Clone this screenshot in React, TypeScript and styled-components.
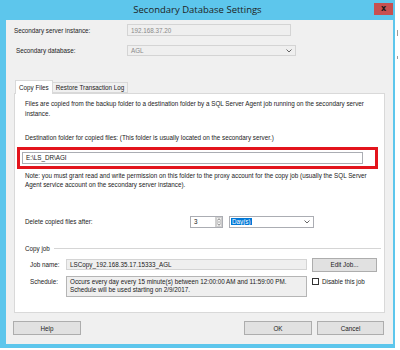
import React from "react";
import styled, { createGlobalStyle } from "styled-components";

const Global = createGlobalStyle`
  html, body { margin: 0; padding: 0; background: #ffffff; }
  body { font-family: "Liberation Sans", Arial, sans-serif; color: #1a1a1a; }
  * { box-sizing: border-box; }
`;

const Page = styled.div`
  width: 400px;
  height: 350px;
  display: flex;
  background: #ffffff;
`;

const Win = styled.div`
  width: 395px;
  height: 348px;
  background: #5dc6ec;
  display: flex;
  flex-direction: column;
  padding: 0 2px 4px 6px;
`;

const TitleBar = styled.div`
  height: 20px;
  display: flex;
  align-items: flex-start;
  position: relative;
  margin-left: -6px;
  margin-right: -2px;
`;

const Title = styled.div`
  flex: 1;
  text-align: center;
  font-family: "Open Sans", "Noto Sans", sans-serif;
  font-size: 9.5px;
  line-height: 20px;
  color: #1e1e1e;
`;

const Close = styled.div`
  position: absolute;
  right: 2px;
  top: 3px;
  width: 19px;
  height: 12px;
  background: #c75050;
  color: #1a1a1a;
  font-family: "DejaVu Sans", sans-serif;
  font-weight: bold;
  font-size: 8px;
  line-height: 12px;
  text-align: center;
`;

const Body = styled.div`
  flex: 1;
  background: #f0f0f0;
  display: flex;
  flex-direction: column;
  padding: 4px 0 0 8px;
  font-size: 6.3px;
`;

const Row = styled.div<{ $mt?: number; $h: number; $top?: boolean }>`
  display: flex;
  align-items: ${(p) => (p.$top ? "flex-start" : "center")};
  height: ${(p) => p.$h}px;
  margin-top: ${(p) => p.$mt ?? 0}px;
  white-space: nowrap;
`;

const Label = styled.div<{ $w: number; $pl?: number; $pt?: number }>`
  width: ${(p) => p.$w}px;
  padding-left: ${(p) => p.$pl ?? 0}px;
  padding-top: ${(p) => p.$pt ?? 0}px;
  flex-shrink: 0;
  color: #222;
`;

const Field = styled.div<{ $w: number; $h: number; $disabled?: boolean; $grey?: boolean; $ml?: number }>`
  width: ${(p) => p.$w}px;
  height: ${(p) => p.$h}px;
  margin-left: ${(p) => p.$ml ?? 0}px;
  border: 1px solid ${(p) => (p.$disabled ? "#d4d4d4" : "#abadb3")};
  background: ${(p) => (p.$disabled ? "#efefef" : "#ffffff")};
  color: ${(p) => (p.$grey ? "#8a8a8a" : "#1a1a1a")};
  display: flex;
  align-items: center;
  padding-left: 3px;
  flex-shrink: 0;
  position: relative;
  overflow: hidden;
  white-space: nowrap;
`;

const MultiField = styled(Field)`
  align-items: flex-start;
  flex-direction: column;
  padding-top: 1px;
  line-height: 8.5px;
  border-color: #b5b5b5;
`;

const Chevron = styled.svg`
  position: absolute;
  right: 3px;
  top: 50%;
  transform: translateY(-50%);
`;

const TabStrip = styled.div`
  display: flex;
  align-items: flex-end;
  height: 13px;
  margin-top: 24px;
  margin-left: 1px;
`;

const Tab = styled.div<{ $active?: boolean }>`
  height: ${(p) => (p.$active ? 14 : 11)}px;
  padding: 0 3px;
  border: 1px solid #d9d9d9;
  border-bottom: ${(p) => (p.$active ? "none" : "1px solid #d9d9d9")};
  background: ${(p) => (p.$active ? "#ffffff" : "#f0f0f0")};
  display: flex;
  align-items: center;
  margin-left: ${(p) => (p.$active ? 0 : -1)}px;
  margin-bottom: ${(p) => (p.$active ? -1 : 0)}px;
  position: relative;
  z-index: ${(p) => (p.$active ? 2 : 1)};
  white-space: nowrap;
  color: #222;
`;

const Panel = styled.div`
  width: 371px;
  height: 220px;
  border: 1px solid #d9d9d9;
  background: #ffffff;
  display: flex;
  flex-direction: column;
  padding: 5px 0 0 10px;
  position: relative;
  z-index: 1;
`;

const Para = styled.div<{ $mt?: number }>`
  line-height: 9.5px;
  white-space: nowrap;
  margin-top: ${(p) => p.$mt ?? 0}px;
  color: #222;
`;

const RedBox = styled.div`
  width: 361px;
  height: 22px;
  margin-left: -8px;
  margin-top: 4px;
  border: 3px solid #e3141c;
  display: flex;
  align-items: center;
  padding-left: 2px;
`;

const Spin = styled.div`
  width: 33px;
  height: 12px;
  border: 1px solid #abadb3;
  background: #fff;
  display: flex;
  align-items: center;
  padding-left: 3px;
  justify-content: space-between;
  margin-left: 165px;
  flex-shrink: 0;
`;

const SpinBtns = styled.div`
  width: 7px;
  height: 10px;
  display: flex;
  flex-direction: column;
  border-left: 1px solid #d0d0d0;
`;

const SpinBtn = styled.div`
  flex: 1;
  display: flex;
  align-items: center;
  justify-content: center;
  background: #f3f3f3;
  border: 1px solid #cfcfcf;
`;

const Selected = styled.span`
  background: #0078d7;
  color: #ffffff;
  padding: 0 1px;
  margin-left: -2px;
`;

const GroupHead = styled.div`
  display: flex;
  align-items: center;
  margin-top: 16px;
  height: 10px;
`;

const GroupLine = styled.div`
  width: 327px;
  height: 1px;
  background: #d5d5d5;
  margin-left: 4px;
`;

const Button = styled.div<{ $w: number; $h: number; $ml?: number }>`
  width: ${(p) => p.$w}px;
  height: ${(p) => p.$h}px;
  margin-left: ${(p) => p.$ml ?? 0}px;
  border: 1px solid #adadad;
  background: #e1e1e1;
  display: flex;
  align-items: center;
  justify-content: center;
  color: #222;
  flex-shrink: 0;
`;

const Check = styled.div`
  width: 7px;
  height: 7px;
  border: 1px solid #333;
  background: #fff;
  flex-shrink: 0;
`;

const CheckRow = styled.div`
  display: flex;
  align-items: center;
  gap: 3px;
  margin-left: 5px;
  margin-top: 2px;
`;

const Footer = styled.div`
  display: flex;
  align-items: center;
  margin-top: 8px;
  margin-left: -1px;
`;

const EdgeMark = styled.div`
  width: 3px;
  margin-left: 2px;
  display: flex;
  flex-direction: column;
`;

const Mark = styled.div<{ $mt: number; $h: number }>`
  margin-top: ${(p) => p.$mt}px;
  height: ${(p) => p.$h}px;
  width: 1px;
  background: #9a9a9a;
`;

const ChevronIcon = () => (
  <Chevron width="6" height="4" viewBox="0 0 6 4">
    <path d="M0.5 0.5 L3 3 L5.5 0.5" fill="none" stroke="#555" strokeWidth="0.9" />
  </Chevron>
);

export default function App() {
  return (
    <Page>
      <Global />
      <Win>
        <TitleBar>
          <Title>Secondary Database Settings</Title>
          <Close>x</Close>
        </TitleBar>
        <Body>
          <Row $h={12}>
            <Label $w={113}>Secondary server instance:</Label>
            <Field $w={164} $h={12} $disabled $grey>
              192.168.37.20
            </Field>
          </Row>
          <Row $h={11} $mt={9}>
            <Label $w={113} $pl={2}>
              Secondary database:
            </Label>
            <Field $w={169} $h={11} $disabled $grey>
              AGL
              <ChevronIcon />
            </Field>
          </Row>
          <TabStrip>
            <Tab $active>Copy Files</Tab>
            <Tab>Restore Transaction Log</Tab>
          </TabStrip>
          <Panel>
            <Para>
              Files are copied from the backup folder to a destination folder by a SQL Server Agent job running on the secondary server
              <br />
              instance.
            </Para>
            <Para $mt={15}>
              Destination folder for copied files: (This folder is usually located on the secondary server.)
            </Para>
            <RedBox>
              <Field $w={341} $h={12}>
                E:\LS_DR\AGI
              </Field>
            </RedBox>
            <Para $mt={2}>
              Note: you must grant read and write permission on this folder to the proxy account for the copy job (usually the SQL Server
              <br />
              Agent service account on the secondary server instance).
            </Para>
            <Row $h={12} $mt={26}>
              <Label $w={0}>Delete copied files after:</Label>
              <Spin>
                3
                <SpinBtns>
                  <SpinBtn>
                    <svg width="4" height="3" viewBox="0 0 4 3">
                      <path d="M0.3 2.5 L2 0.7 L3.7 2.5" fill="none" stroke="#555" strokeWidth="0.7" />
                    </svg>
                  </SpinBtn>
                  <SpinBtn>
                    <svg width="4" height="3" viewBox="0 0 4 3">
                      <path d="M0.3 0.5 L2 2.3 L3.7 0.5" fill="none" stroke="#555" strokeWidth="0.7" />
                    </svg>
                  </SpinBtn>
                </SpinBtns>
              </Spin>
              <Field $w={85} $h={12} $ml={6}>
                <Selected>Day(s)</Selected>
                <ChevronIcon />
              </Field>
            </Row>
            <GroupHead>
              Copy job
              <GroupLine />
            </GroupHead>
            <Row $h={14} $mt={4}>
              <Label $w={41} $pl={5}>
                Job name:
              </Label>
              <Field $w={241} $h={11} $disabled>
                LSCopy_192.168.35.17.15333_AGL
              </Field>
              <Button $w={65} $h={14} $ml={5}>
                Edit Job...
              </Button>
            </Row>
            <Row $h={22} $mt={4} $top>
              <Label $w={41} $pl={5} $pt={2}>
                Schedule:
              </Label>
              <MultiField $w={241} $h={21} $disabled>
                <span>Occurs every day every 15 minute(s) between 12:00:00 AM and 11:59:00 PM.</span>
                <span>Schedule will be used starting on 2/9/2017.</span>
              </MultiField>
              <CheckRow>
                <Check />
                Disable this job
              </CheckRow>
            </Row>
          </Panel>
          <Footer>
            <Button $w={68} $h={14}>
              Help
            </Button>
            <Button $w={68} $h={14} $ml={163}>
              OK
            </Button>
            <Button $w={67} $h={14} $ml={5}>
              Cancel
            </Button>
          </Footer>
        </Body>
      </Win>
      <EdgeMark>
        <Mark $mt={30} $h={6} />
        <Mark $mt={20} $h={3} />
      </EdgeMark>
    </Page>
  );
}
